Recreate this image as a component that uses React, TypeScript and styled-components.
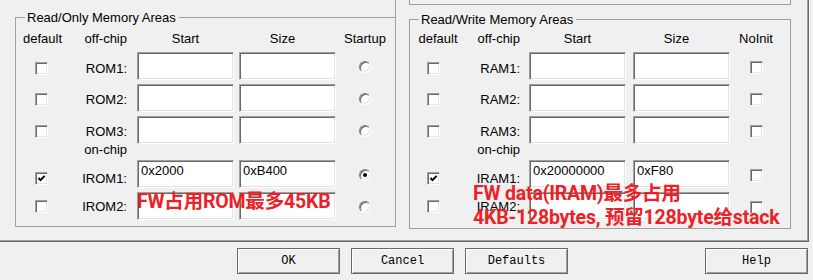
import styled, { createGlobalStyle } from 'styled-components';

const GlobalStyle = createGlobalStyle`
  html, body {
    margin: 0;
    padding: 0;
  }
  body {
    background: #f0f0f0;
    font-family: "Liberation Sans", Arial, sans-serif;
    font-size: 13px;
    color: #000;
    overflow: hidden;
  }
`;

type Last = 'radio' | 'radioOn' | 'box';

interface Area {
  def: boolean;
  name: string;
  start?: string;
  size?: string;
  last: Last;
  shift: number;
  gap: number;
}

interface Cols {
  check: number;
  inset: number;
  label: number;
  labelGap: number;
  fieldGap: number;
  last: number;
}

const romCols: Cols = { check: 53, inset: 19, label: 58, labelGap: 10, fieldGap: 5, last: 58 };
const ramCols: Cols = { check: 56, inset: 17, label: 54, labelGap: 9, fieldGap: 7, last: 52 };

const romOff: Area[] = [
  { def: false, name: 'ROM1:', last: 'radio', shift: 5, gap: 6 },
  { def: false, name: 'ROM2:', last: 'radio', shift: 3, gap: 4 },
  { def: false, name: 'ROM3:', last: 'radio', shift: 2, gap: 4 },
];
const romOn: Area[] = [
  { def: true, name: 'IROM1:', start: '0x2000', size: '0xB400', last: 'radioOn', shift: 8, gap: 0 },
  { def: false, name: 'IROM2:', last: 'radio', shift: 0, gap: 4 },
];
const ramOff: Area[] = [
  { def: false, name: 'RAM1:', last: 'box', shift: 5, gap: 6 },
  { def: false, name: 'RAM2:', last: 'box', shift: 3, gap: 4 },
  { def: false, name: 'RAM3:', last: 'box', shift: 2, gap: 4 },
];
const ramOn: Area[] = [
  { def: true, name: 'IRAM1:', start: '0x20000000', size: '0xF80', last: 'box', shift: 8, gap: 0 },
  { def: false, name: 'IRAM2:', last: 'box', shift: 0, gap: 4 },
];

function Tick() {
  return (
    <svg width="9" height="9" viewBox="0 0 9 9">
      <polyline points="1.5,4 3.5,6.2 7.6,1.8" fill="none" stroke="#000" strokeWidth="1.9" />
    </svg>
  );
}

function AreaRow({ row, cols }: { row: Area; cols: Cols }) {
  return (
    <FieldRow $gap={row.gap}>
      <CheckCell $w={cols.check} $inset={cols.inset} $shift={row.shift}>
        <CheckBox>{row.def && <Tick />}</CheckBox>
      </CheckCell>
      <LabelCell $w={cols.label} $mr={cols.labelGap} $shift={row.shift}>
        {row.name}
      </LabelCell>
      <Field $mr={cols.fieldGap}>{row.start}</Field>
      <Field $mr={0}>{row.size}</Field>
      <LastCell $w={cols.last}>
        {row.last === 'box' ? <CheckBox /> : <Radio>{row.last === 'radioOn' && <Dot />}</Radio>}
      </LastCell>
    </FieldRow>
  );
}

function AreaGroup({
  title,
  lastTitle,
  cols,
  off,
  on,
  mt,
  pt,
  pb,
}: {
  title: string;
  lastTitle: string;
  cols: Cols;
  off: Area[];
  on: Area[];
  mt: number;
  pt: number;
  pb: number;
}) {
  return (
    <Group $mt={mt} $pt={pt} $pb={pb}>
      <Legend>{title}</Legend>
      <Body>
        <HeaderRow>
          <HeadCell $w={cols.check}>default</HeadCell>
          <HeadCell $w={cols.label} $align="right">off-chip</HeadCell>
          <HeadCell $w={97} $ml={cols.labelGap}>Start</HeadCell>
          <HeadCell $w={97} $ml={cols.fieldGap} $pr={10}>Size</HeadCell>
          <HeadCell $w={cols.last}>{lastTitle}</HeadCell>
        </HeaderRow>
        {off.map((r) => (
          <AreaRow key={r.name} row={r} cols={cols} />
        ))}
        <OnChip $indent={cols.check} $w={cols.label}>on-chip</OnChip>
        {on.map((r) => (
          <AreaRow key={r.name} row={r} cols={cols} />
        ))}
      </Body>
    </Group>
  );
}

export default function App() {
  return (
    <Screen>
      <GlobalStyle />
      <Page>
        <Column $w={381}>
          <Stub />
          <AreaGroup
            title="Read/Only Memory Areas"
            lastTitle="Startup"
            cols={romCols}
            off={romOff}
            on={romOn}
            mt={-7}
            pt={6}
            pb={6}
          />
        </Column>
        <Column $w={382}>
          <UpperBox />
          <AreaGroup
            title="Read/Write Memory Areas"
            lastTitle="NoInit"
            cols={ramCols}
            off={ramOff}
            on={ramOn}
            mt={7}
            pt={4}
            pb={8}
          />
        </Column>
        <Note $left={137} $top={190}>FW占用ROM最多45KB</Note>
        <Note $left={473} $top={182}>
          FW data(IRAM)最多占用
          <br />
          4KB-128bytes, 预留128byte给stack
        </Note>
      </Page>
      <ButtonBar>
        <Button>OK</Button>
        <Button>Cancel</Button>
        <Button>Defaults</Button>
        <Button $push>Help</Button>
      </ButtonBar>
    </Screen>
  );
}

const Screen = styled.div`
  width: 813px;
  height: 280px;
  display: flex;
  flex-direction: column;
`;

const Page = styled.div`
  position: relative;
  box-sizing: border-box;
  width: 809px;
  height: 242px;
  padding-left: 15px;
  display: flex;
  align-items: flex-start;
  gap: 13px;
  border-right: 1px solid #696969;
  border-bottom: 1px solid #696969;
  box-shadow: inset -1px -1px 0 #a0a0a0;
`;

const Column = styled.div<{ $w: number }>`
  width: ${(p) => p.$w}px;
  display: flex;
  flex-direction: column;
`;

const Stub = styled.div`
  align-self: flex-end;
  width: 1px;
  height: 17px;
  background: #a0a0a0;
`;

const UpperBox = styled.div`
  height: 4px;
  border: 1px solid #a0a0a0;
  border-top: none;
`;

const Group = styled.fieldset<{ $mt: number; $pt: number; $pb: number }>`
  margin: ${(p) => p.$mt}px 0 0;
  padding: ${(p) => p.$pt}px 0 ${(p) => p.$pb}px;
  border: 1px solid #a0a0a0;
  min-width: 0;
`;

const Legend = styled.legend`
  margin-left: 9px;
  padding: 0 3px 0 2px;
  line-height: 15px;
`;

const Body = styled.div`
  display: flex;
  flex-direction: column;
`;

const HeaderRow = styled.div`
  display: flex;
  height: 15px;
  line-height: 15px;
  white-space: nowrap;
`;

const HeadCell = styled.div<{ $w: number; $align?: 'left' | 'center' | 'right'; $ml?: number; $pr?: number }>`
  box-sizing: border-box;
  width: ${(p) => p.$w}px;
  margin-left: ${(p) => p.$ml ?? 0}px;
  padding-right: ${(p) => p.$pr ?? 0}px;
  text-align: ${(p) => p.$align ?? 'center'};
`;

const FieldRow = styled.div<{ $gap: number }>`
  display: flex;
  height: 28px;
  margin-top: ${(p) => p.$gap}px;
`;

const CheckCell = styled.div<{ $w: number; $inset: number; $shift: number }>`
  box-sizing: border-box;
  width: ${(p) => p.$w}px;
  padding-left: ${(p) => p.$inset}px;
  padding-top: ${(p) => p.$shift}px;
  display: flex;
  align-items: center;
`;

const LabelCell = styled.div<{ $w: number; $mr: number; $shift: number }>`
  box-sizing: border-box;
  width: ${(p) => p.$w}px;
  margin-right: ${(p) => p.$mr}px;
  padding-top: ${(p) => p.$shift}px;
  display: flex;
  align-items: center;
  justify-content: flex-end;
  line-height: 15px;
  white-space: nowrap;
`;

const Field = styled.div<{ $mr: number }>`
  box-sizing: border-box;
  width: 97px;
  height: 28px;
  margin-right: ${(p) => p.$mr}px;
  padding: 2px 3px;
  line-height: 15px;
  background: #fff;
  border: 1px solid;
  border-color: #a0a0a0 #fff #fff #a0a0a0;
  box-shadow: inset 1px 1px 0 #696969, inset -1px -1px 0 #e3e3e3;
  white-space: nowrap;
`;

const LastCell = styled.div<{ $w: number }>`
  box-sizing: border-box;
  width: ${(p) => p.$w}px;
  padding-top: 2px;
  display: flex;
  align-items: center;
  justify-content: center;
`;

const CheckBox = styled.div`
  box-sizing: border-box;
  width: 13px;
  height: 13px;
  background: #fff;
  border: 1px solid;
  border-color: #a0a0a0 #fff #fff #a0a0a0;
  box-shadow: inset 1px 1px 0 #696969, inset -1px -1px 0 #e3e3e3;
  display: flex;
  align-items: center;
  justify-content: center;
`;

const Radio = styled.div`
  box-sizing: border-box;
  width: 12px;
  height: 12px;
  border-radius: 50%;
  background: #fff;
  border: 1px solid;
  border-color: #808080 #fff #fff #808080;
  box-shadow: inset 1px 1px 0 #696969, inset -1px -1px 0 #e3e3e3;
  display: flex;
  align-items: center;
  justify-content: center;
`;

const Dot = styled.div`
  width: 4px;
  height: 4px;
  border-radius: 50%;
  background: #000;
`;

const OnChip = styled.div<{ $indent: number; $w: number }>`
  margin-left: ${(p) => p.$indent}px;
  width: ${(p) => p.$w}px;
  height: 16px;
  line-height: 11px;
  text-align: right;
  white-space: nowrap;
`;

const Note = styled.div<{ $left: number; $top: number }>`
  position: absolute;
  left: ${(p) => p.$left}px;
  top: ${(p) => p.$top}px;
  font-family: Roboto, "Noto Sans CJK SC", sans-serif;
  font-weight: 700;
  font-size: 19.5px;
  letter-spacing: -0.2px;
  line-height: 24px;
  color: #ec2127;
  white-space: nowrap;
`;

const ButtonBar = styled.div`
  display: flex;
  gap: 11px;
  padding: 6px 5px 0 237px;
`;

const Button = styled.button<{ $push?: boolean }>`
  box-sizing: border-box;
  width: 103px;
  height: 26px;
  margin-left: ${(p) => (p.$push ? 'auto' : '0')};
  padding: 0;
  font-family: "Liberation Mono", "Courier New", monospace;
  font-size: 12px;
  color: #000;
  background: #f0f0f0;
  border: 1px solid #696969;
  box-shadow: inset 1px 1px 0 #fff, inset -1px -1px 0 #a0a0a0;
`;
